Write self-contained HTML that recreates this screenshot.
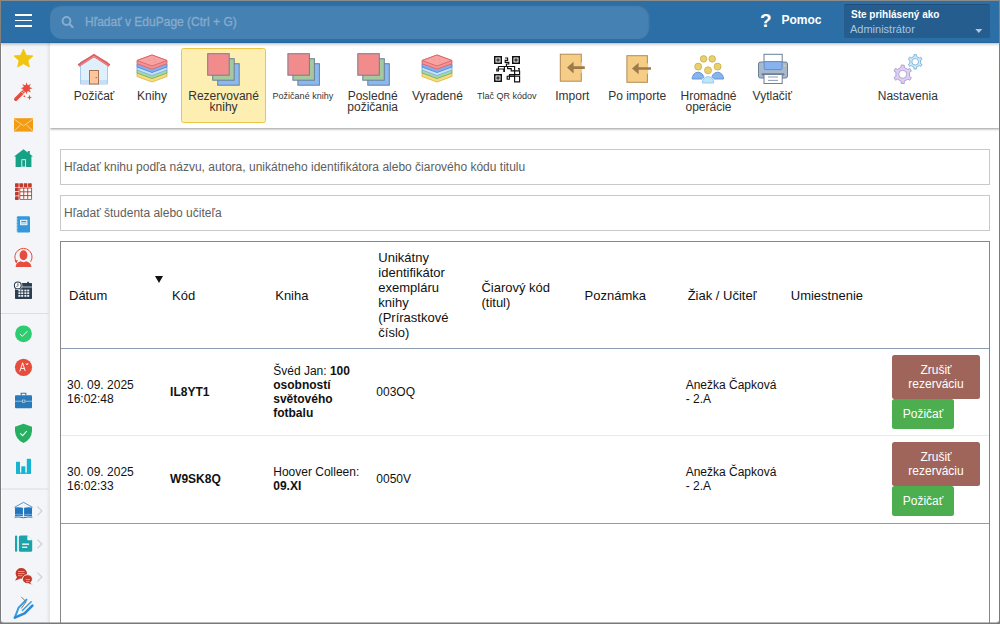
<!DOCTYPE html>
<html><head><meta charset="utf-8">
<style>
*{box-sizing:border-box;margin:0;padding:0}
html,body{width:1000px;height:624px;overflow:hidden;background:#787878;font-family:"Liberation Sans",sans-serif;color:#222}
#frame{position:absolute;left:0;top:0;width:1000px;height:623px;overflow:hidden;background:#fff;border-radius:0 0 4px 4px}
#border{position:absolute;left:0;top:0;width:1000px;height:624px;border:1px solid #7a7a7a;border-top-color:#8c8c8b;border-bottom-color:#787878;box-shadow:inset 0 -1.6px 0.6px -0.6px rgba(120,120,120,.5);border-radius:0 0 4px 4px;z-index:99}
#bl{position:absolute;left:0;top:0;width:1px;height:80px;background:linear-gradient(#8a857f,#7a7a7a);z-index:100}
#br{position:absolute;right:0;top:0;width:1px;height:80px;background:linear-gradient(#8a857f,#7a7a7a);z-index:100}
#hdr{position:absolute;left:0;top:0;width:1000px;height:43px;background:#2c6fa7;border-bottom:1px solid #2767a1;box-shadow:0 1px 3px rgba(0,0,0,.3);z-index:5}
#burger i{position:absolute;left:15px;width:17px;height:1.8px;background:#fff}
#gsearch{position:absolute;left:50px;top:5px;width:600px;height:34px;border-radius:12px;background:#4581b3;box-shadow:inset -1px 1px 1.5px rgba(0,0,0,.16)}
#gsearch span{position:absolute;left:35px;top:10px;font-size:12px;color:#87abcc;-webkit-text-stroke:0.35px #87abcc}
#help{position:absolute;left:760px;top:10px;color:#fff;font-weight:bold;font-size:12px}
#user{position:absolute;left:844px;top:4px;width:146px;height:34px;background:#255d8e;border-radius:2px;border-top:1px solid #1f4f7a}
#user .l1{position:absolute;left:7px;top:4px;font-size:10px;font-weight:bold;color:#fff}
#user .l2{position:absolute;left:6px;top:18px;font-size:11px;color:#a9c6e0}
#side{position:absolute;left:0;top:42px;width:50px;height:582px;background:#f3f5f8;border-left:2px solid #fbfcfd;box-shadow:inset -3px 0 3px -1px rgba(0,0,0,.07);z-index:3}
#tb{position:absolute;left:50px;top:42px;width:950px;height:86px;background:#fff;box-shadow:0 1px 2.5px rgba(0,0,0,.42);z-index:2}
#sel{z-index:3;position:absolute;left:181px;top:48px;width:85px;height:75px;background:#fdeeb2;border:1px solid #efc547;border-radius:2.5px}
.tl{z-index:4;position:absolute;top:91px;width:120px;text-align:center;font-size:12px;line-height:11px;color:#333}
.tl.sm{font-size:9px;top:91.4px}
.inp{position:absolute;left:60px;width:930px;height:36px;border:1px solid #c9c9c9;font-size:12px;color:#5e5e5e}
.inp span{position:absolute;left:3px;top:10px}
#tbl{position:absolute;left:60px;top:241px;width:930px;height:400px;border:1px solid #888;border-bottom:none}
table{border-collapse:collapse;table-layout:fixed;width:928px}
td,th{font-weight:normal;text-align:left;vertical-align:middle;padding:0 0 0 8px;font-size:12px;line-height:14px;color:#111}
th{font-size:13px;line-height:15px;height:106px;padding-top:2px}
tr.r td{height:auto}
tr.r{height:87px}
.btn{position:absolute;color:#fff;font-size:12px;line-height:14px;text-align:center;border-radius:2.5px}
</style></head><body>
<div id="frame">
<div id="hdr">
  <div id="burger"><i style="top:14.2px"></i><i style="top:19.5px"></i><i style="top:24.8px"></i></div>
  <div id="gsearch">
    <svg style="position:absolute;left:11px;top:10px" width="14" height="14" viewBox="0 0 14 14"><circle cx="5.5" cy="6" r="3.9" fill="none" stroke="#86acd0" stroke-width="2"/><path d="M8.5 9L11.5 12" stroke="#86acd0" stroke-width="2.2" stroke-linecap="round"/></svg>
    <span>Hľadať v EduPage (Ctrl + G)</span>
  </div>
  <div id="help"><span style="font-size:19px;position:absolute;left:0;top:0px">?</span><span style="position:absolute;left:21.5px;top:3.3px">Pomoc</span></div>
  <div id="user"><div class="l1">Ste prihlásený ako</div><div class="l2">Administrátor</div>
    <svg style="position:absolute;left:131px;top:23.5px" width="8" height="5"><path d="M0.3 0H7.3L3.8 4z" fill="#adc8e2"/></svg></div>
</div>
<div id="side"></div>
<svg id="sidesvg" style="position:absolute;left:0;top:0;z-index:4" width="50" height="624" viewBox="0 0 50 624">
<!-- star -->
<polygon points="23.50,49.00 26.26,55.20 33.01,55.91 27.97,60.45 29.38,67.09 23.50,63.70 17.62,67.09 19.03,60.45 13.99,55.91 20.74,55.20" fill="#f1c40f" stroke="#f1c40f" stroke-width="0.8" stroke-linejoin="round"/>
<!-- wand -->
<polygon points="26.60,82.20 27.71,85.52 30.84,83.96 29.28,87.09 32.60,88.20 29.28,89.31 30.84,92.44 27.71,90.88 26.60,94.20 25.49,90.88 22.36,92.44 23.92,89.31 20.60,88.20 23.92,87.09 22.36,83.96 25.49,85.52" fill="#e74c3c"/>
<circle cx="26.6" cy="88.2" r="3" fill="#e74c3c"/>
<line x1="15.8" y1="99.2" x2="25" y2="90" stroke="#e74c3c" stroke-width="3.6" stroke-linecap="round"/>
<line x1="21.3" y1="91.6" x2="23.6" y2="93.9" stroke="#f3f4f7" stroke-width="0.8"/>
<line x1="22.6" y1="90.3" x2="24.9" y2="92.6" stroke="#f3f4f7" stroke-width="0.8"/>
<path d="M29.5 94.8 L30.3 96.9 L32.2 97.5 L30.3 98.1 L29.5 100.2 L28.7 98.1 L26.8 97.5 L28.7 96.9z" fill="#e74c3c"/>
<path d="M24.3 95 L25.3 97 L23.3 97z" fill="#e74c3c"/>
<!-- envelope -->
<rect x="14" y="118.2" width="19" height="13.4" fill="#f39c12"/>
<path d="M14.3 119.2 L23.5 125.8 L32.7 119.2 M14.3 130.8 L20.5 124.8 M32.7 130.8 L26.5 124.8" fill="none" stroke="#fbe0b0" stroke-width="0.8"/>
<!-- house -->
<path d="M23.5 149.2 L14 156.6 L15.6 156.6 L15.6 167 L31.4 167 L31.4 156.6 L33 156.6 L29.8 154.1 L29.8 150.9 L27.8 150.9 L27.8 152.6z" fill="#16a085"/>
<rect x="21.8" y="159.7" width="3.8" height="7.3" fill="none" stroke="#e3f4f0" stroke-width="0.9"/>
<!-- grid -->
<g fill="#c0392b"><rect x="15.00" y="183.2" width="3.7" height="3.7" rx="0.6"/><rect x="19.35" y="183.2" width="3.7" height="3.7" rx="0.6"/><rect x="23.70" y="183.2" width="3.7" height="3.7" rx="0.6"/><rect x="28.05" y="183.2" width="3.7" height="3.7" rx="0.6"/><rect x="15" y="187.55" width="3.7" height="3.7" rx="0.6"/><rect x="15" y="191.90" width="3.7" height="3.7" rx="0.6"/><rect x="15" y="196.25" width="3.7" height="3.7" rx="0.6"/><rect x="19.35" y="187.55" width="12.7" height="12.3" rx="0.8"/></g>
<g fill="#fff"><rect x="20.30" y="188.50" width="3" height="2.85"/><rect x="20.30" y="192.30" width="3" height="2.85"/><rect x="20.30" y="196.10" width="3" height="2.85"/><rect x="24.25" y="188.50" width="3" height="2.85"/><rect x="24.25" y="192.30" width="3" height="2.85"/><rect x="24.25" y="196.10" width="3" height="2.85"/><rect x="28.20" y="188.50" width="3" height="2.85"/><rect x="28.20" y="192.30" width="3" height="2.85"/><rect x="28.20" y="196.10" width="3" height="2.85"/></g>
<!-- notebook -->
<rect x="16.8" y="216.3" width="13.2" height="16.2" rx="1.3" fill="#3498db"/>
<rect x="20.6" y="220.2" width="6.4" height="4.6" fill="#aed6f1" stroke="#fff" stroke-width="0.8"/><rect x="21.4" y="221" width="4.8" height="0.9" fill="#3a8fd0"/>
<g stroke="#d6eaf8" stroke-width="0.7"><line x1="16" y1="219" x2="18" y2="219"/><line x1="16" y1="222" x2="18" y2="222"/><line x1="16" y1="225" x2="18" y2="225"/><line x1="16" y1="228" x2="18" y2="228"/><line x1="16" y1="231" x2="18" y2="231"/></g>
<!-- person -->
<ellipse cx="23.5" cy="255.3" rx="3.9" ry="5" fill="#e74c3c"/>
<path d="M15.6 267 Q15.8 262.6 20.6 261.2 L23.5 262.2 L26.4 261.2 Q31.2 262.6 31.4 267z" fill="#e74c3c"/>
<path d="M16.2 261.6 A8.6 8.6 0 1 1 30.6 261.8" fill="none" stroke="#e74c3c" stroke-width="1"/>
<path d="M14.4 260.8 L17.8 260 L16.6 263.6z" fill="#e74c3c"/>
<!-- calendar -->
<rect x="15" y="283" width="17" height="16" rx="0.8" fill="#2c3e50"/>
<rect x="15" y="286.2" width="17" height="1.6" fill="#8794a2"/>
<rect x="27.2" y="281.8" width="1.8" height="3" rx="0.5" fill="#2c3e50"/>
<g fill="#f4f6f8"><rect x="18.4" y="289.6" width="2" height="1.8"/><rect x="21.2" y="289.6" width="2" height="1.8"/><rect x="24.4" y="289.6" width="2" height="1.8"/><rect x="27.2" y="289.6" width="2" height="1.8"/><rect x="18.4" y="292.3" width="2" height="1.8"/><rect x="21.2" y="292.3" width="2" height="1.8"/><rect x="24.4" y="292.3" width="2" height="1.8"/><rect x="27.2" y="292.3" width="2" height="1.8"/><rect x="18.4" y="295.0" width="2" height="1.8"/><rect x="21.2" y="295.0" width="2" height="1.8"/><rect x="24.4" y="295.0" width="2" height="1.8"/><rect x="27.2" y="295.0" width="2" height="1.8"/></g>
<circle cx="17.8" cy="285.4" r="4.6" fill="#f3f5f8"/>
<circle cx="17.8" cy="285.4" r="3.4" fill="#ffffff" stroke="#2c3e50" stroke-width="1.1"/>
<path d="M17.9 283.4 V285.6 L16.5 287" fill="none" stroke="#2c3e50" stroke-width="0.9"/>
<!-- separator -->
<rect x="1" y="313" width="48" height="1" fill="#dcdee2"/>
<!-- green badge -->
<circle cx="23.5" cy="333.8" r="8.4" fill="#2ecc71"/>
<path d="M19.9 334 L22.4 336.3 L27.4 331.2" fill="none" stroke="#fff" stroke-width="0.9"/>
<!-- red A -->
<circle cx="23.5" cy="367.3" r="8.6" fill="#e74c3c"/>
<path d="M19.8 371.5 L22.6 362.8 L25.2 371 M20.8 368.6 L24.6 368.4 M26 363.5 L27 365 L28 363" fill="none" stroke="#fff" stroke-width="0.9"/>
<!-- briefcase -->
<path d="M21.2 395.5 V393.3 H25.8 V395.5" fill="none" stroke="#2a7ab8" stroke-width="1.1"/>
<rect x="15" y="395.3" width="17" height="13" rx="1" fill="#2a7ab8"/>
<rect x="15" y="400.8" width="17" height="0.8" fill="#a9cce3"/>
<rect x="22.3" y="400" width="2.6" height="2.4" fill="#2a7ab8" stroke="#d4e6f1" stroke-width="0.6"/>
<!-- shield -->
<path d="M23.5 423.8 L32 426.8 L32 431 Q31.5 439.5 23.5 443 Q15.5 439.5 15 431 L15 426.8z" fill="#27ae60"/>
<path d="M20.3 433.3 L22.7 435.6 L26.8 431" fill="none" stroke="#fff" stroke-width="1.1"/>
<!-- bar chart -->
<g fill="#17b3d3"><rect x="16" y="461.8" width="4" height="12"/><rect x="21.3" y="466.3" width="4" height="7.5"/><rect x="26.8" y="458.8" width="4.2" height="15"/><rect x="16" y="472.6" width="15" height="1.2"/></g>
<rect x="1" y="488.5" width="48" height="1" fill="#dcdee2"/>
<!-- book -->
<path d="M14.4 507.4 L23.5 502.3 L32.6 507.4" fill="none" stroke="#2f7fc4" stroke-width="0.8"/>
<path d="M15 507.6 Q19 506.8 22.9 507.8 V516.2 Q19 515.4 15 516.2z M32 507.6 Q28 506.8 24.1 507.8 V516.2 Q28 515.4 32 516.2z" fill="#2176bd"/>
<path d="M15 514.6 Q19 513.8 22.9 514.8 M24.1 514.8 Q28 513.8 32 514.6" fill="none" stroke="#a8cbe9" stroke-width="0.6"/>
<path d="M14.6 517.2 Q19 516.4 23.5 517.8 Q28 516.4 32.4 517.2" fill="none" stroke="#2176bd" stroke-width="1"/>
<!-- doc -->
<rect x="15" y="535.5" width="2.2" height="16.3" rx="1" fill="#1aa3a8"/>
<path d="M20.4 535.5 H27.4 L32.2 540.3 V550.3 Q32.2 551.8 30.7 551.8 H20.4 Q18.9 551.8 18.9 550.3 V537 Q18.9 535.5 20.4 535.5z" fill="#1aa3a8"/>
<path d="M27.4 535.5 V540.3 H32.2z" fill="#f3f5f8"/>
<path d="M27.9 536.2 L31.6 539.8 H27.9z" fill="#ffffff"/>
<rect x="22.1" y="543.5" width="7" height="1.3" fill="#fff"/><rect x="22.1" y="546.6" width="5.2" height="1.3" fill="#fff"/>
<!-- chat -->
<path d="M15.6 573.3 A5.7 5.3 0 1 1 20.5 578.6 L15 580.8 L17 577.2 Q15.6 575.6 15.6 573.3z" fill="#c0392b"/>
<path d="M22.4 579.2 A5 4.5 0 1 1 30.6 582.6 L32.6 585.3 L28 583.6 A5 4.5 0 0 1 22.4 579.2z" fill="#c0392b" stroke="#f3f5f8" stroke-width="0.9"/>
<g stroke="#e8a199" stroke-width="0.9"><line x1="18" y1="571.5" x2="24.5" y2="571.5"/><line x1="18" y1="573.6" x2="24.5" y2="573.6"/><line x1="18" y1="575.7" x2="22.5" y2="575.7"/><line x1="25.5" y1="579.6" x2="30" y2="579.6"/><line x1="26" y1="581.6" x2="29.5" y2="581.6"/></g>
<!-- pen -->
<g fill="none" stroke-linecap="round" stroke-linejoin="round">
<path d="M14.8 617.6 L18.6 607.6 L26.5 599.6" stroke="#3b9bdb" stroke-width="2"/>
<path d="M14.8 617.6 L24.6 613.4 L32.4 605.6" stroke="#2f8ad0" stroke-width="2.6"/>
<path d="M22.4 610.6 L31.2 601.8" stroke="#3b9bdb" stroke-width="1.4"/>
<path d="M21.6 597.2 L26.2 601.8 L21.4 608.2" stroke="#8b7358" stroke-width="1"/>
</g>
<!-- chevrons -->
<g fill="none" stroke="#cdd0d4" stroke-width="1.2"><path d="M37.5 506.5 L41.8 510.9 L37.5 515.3"/><path d="M37.5 539.6 L41.8 544 L37.5 548.4"/><path d="M37.5 572.7 L41.8 577.1 L37.5 581.5"/></g>
</svg>

<div id="tb"></div>
<div id="sel"></div>
<svg id="tbsvg" style="position:absolute;left:0;top:0;z-index:4" width="1000" height="130" viewBox="0 0 1000 130">
<!-- house -->
<path d="M80.5 62 L94 55.5 L107.5 62 V84 H80.5z" fill="#dff0fc" stroke="#a9c9ea" stroke-width="1"/>
<rect x="81" y="80" width="26" height="3.5" fill="#c3e0f6"/>
<path d="M78.5 65.5 L94 55.5 L109.5 65.5" fill="none" stroke="#e25c5c" stroke-width="3" stroke-linejoin="miter"/>
<path d="M79.5 65.5 L94 56.2 L108.5 65.5" fill="none" stroke="#f59a9a" stroke-width="0.8"/>
<rect x="89.5" y="70.5" width="9" height="13.5" fill="#ffc59b" stroke="#a47252" stroke-width="1"/>
<circle cx="96.2" cy="77.6" r="0.7" fill="#7a5038"/>
<polygon points="152.0,67.5 167.0,73.0 167.0,76.5 152.0,82.0 137.0,76.5 137.0,73.0" fill="#f7dc7c" stroke="#d9b94f" stroke-width="0.9" stroke-linejoin="round"/>
<polygon points="152.0,64.5 167.0,70.0 167.0,73.0 152.0,78.5 137.0,73.0 137.0,70.0" fill="#a8d8a2" stroke="#74ad6c" stroke-width="0.9" stroke-linejoin="round"/>
<polygon points="152.0,61.5 167.0,67.0 167.0,70.0 152.0,75.5 137.0,70.0 137.0,67.0" fill="#c4e4fb" stroke="#7eaee0" stroke-width="0.9" stroke-linejoin="round"/>
<polygon points="152.0,58.5 167.0,64.0 167.0,67.0 152.0,72.5 137.0,67.0 137.0,64.0" fill="#80aef0" stroke="#5a86cc" stroke-width="0.9" stroke-linejoin="round"/>
<polygon points="152.0,55.0 167.0,60.5 167.0,63.7 152.0,69.2 137.0,63.7 137.0,60.5" fill="#f39393" stroke="#dc6464" stroke-width="0.9" stroke-linejoin="round"/>
<polygon points="152.0,55.0 167.0,60.5 152.0,66.0 137.0,60.5" fill="#f7a3a3" stroke="#dc6464" stroke-width="0.9" stroke-linejoin="round"/>
<g fill="#e88080"><circle cx="149" cy="60" r="0.5"/><circle cx="154" cy="59" r="0.5"/><circle cx="155" cy="62" r="0.5"/></g>
<rect x="217.7" y="63.7" width="21.5" height="21.5" fill="#8ab9f2" stroke="#6b7f98" stroke-width="1"/>
<rect x="212.7" y="58.7" width="21.5" height="21.5" fill="#a5c99c" stroke="#6b7f98" stroke-width="1"/>
<rect x="207.7" y="53.7" width="21.5" height="21.5" fill="#f28c8c" stroke="#6b7f98" stroke-width="1"/>

<rect x="297.9" y="63.7" width="21.5" height="21.5" fill="#8ab9f2" stroke="#6b7f98" stroke-width="1"/>
<rect x="292.9" y="58.7" width="21.5" height="21.5" fill="#a5c99c" stroke="#6b7f98" stroke-width="1"/>
<rect x="287.9" y="53.7" width="21.5" height="21.5" fill="#f28c8c" stroke="#6b7f98" stroke-width="1"/>

<rect x="367.8" y="63.7" width="21.5" height="21.5" fill="#8ab9f2" stroke="#6b7f98" stroke-width="1"/>
<rect x="362.8" y="58.7" width="21.5" height="21.5" fill="#a5c99c" stroke="#6b7f98" stroke-width="1"/>
<rect x="357.8" y="53.7" width="21.5" height="21.5" fill="#f28c8c" stroke="#6b7f98" stroke-width="1"/>

<polygon points="437.0,67.5 452.0,73.0 452.0,76.5 437.0,82.0 422.0,76.5 422.0,73.0" fill="#f7dc7c" stroke="#d9b94f" stroke-width="0.9" stroke-linejoin="round"/>
<polygon points="437.0,64.5 452.0,70.0 452.0,73.0 437.0,78.5 422.0,73.0 422.0,70.0" fill="#a8d8a2" stroke="#74ad6c" stroke-width="0.9" stroke-linejoin="round"/>
<polygon points="437.0,61.5 452.0,67.0 452.0,70.0 437.0,75.5 422.0,70.0 422.0,67.0" fill="#c4e4fb" stroke="#7eaee0" stroke-width="0.9" stroke-linejoin="round"/>
<polygon points="437.0,58.5 452.0,64.0 452.0,67.0 437.0,72.5 422.0,67.0 422.0,64.0" fill="#80aef0" stroke="#5a86cc" stroke-width="0.9" stroke-linejoin="round"/>
<polygon points="437.0,55.0 452.0,60.5 452.0,63.7 437.0,69.2 422.0,63.7 422.0,60.5" fill="#f39393" stroke="#dc6464" stroke-width="0.9" stroke-linejoin="round"/>
<polygon points="437.0,55.0 452.0,60.5 437.0,66.0 422.0,60.5" fill="#f7a3a3" stroke="#dc6464" stroke-width="0.9" stroke-linejoin="round"/>
<g fill="#e88080"><circle cx="434" cy="60" r="0.5"/><circle cx="439" cy="59" r="0.5"/><circle cx="440" cy="62" r="0.5"/></g>
<!-- QR -->
<rect x="494" y="56" width="8" height="8" fill="#111"/><rect x="495.5" y="57.5" width="5" height="5" fill="#fff"/><rect x="496.5" y="58.5" width="3" height="3" fill="#111"/><rect x="497.4" y="59.4" width="1.2" height="1.2" fill="#999"/>
<rect x="512" y="56" width="8" height="8" fill="#111"/><rect x="513.5" y="57.5" width="5" height="5" fill="#fff"/><rect x="514.5" y="58.5" width="3" height="3" fill="#111"/><rect x="515.4" y="59.4" width="1.2" height="1.2" fill="#999"/>
<rect x="494" y="74" width="8" height="8" fill="#111"/><rect x="495.5" y="75.5" width="5" height="5" fill="#fff"/><rect x="496.5" y="76.5" width="3" height="3" fill="#111"/><rect x="497.4" y="77.4" width="1.2" height="1.2" fill="#999"/>
<g fill="none" stroke="#111" stroke-width="1.15" stroke-linejoin="miter">
<path d="M505 58 H507.6 V60.4 H505.2 V62.4 H508.8 V64 H506.4 V66.5"/>
<path d="M498.4 66.5 H514.6 V71.5"/>
<path d="M498.4 66.5 V71 H496.8 V69 H503.8 V71.3 H504.4 V66.5"/>
<path d="M507.6 66.5 V68.6 H511.2 V70.8 H519.2 V68.6 H518"/>
<path d="M514.6 70.8 V81.8 H519.6 V76.2 H509.6 V74.6 H519.6 V70.8"/>
<path d="M514.6 76.2 H507.2 V79.2 H509.4 V74.6"/>
</g>
<!-- import -->
<rect x="560.3" y="54.2" width="21" height="27" fill="#f5cd86" stroke="#b38b52" stroke-width="1"/>
<rect x="580.5" y="62.5" width="1.6" height="10.5" fill="#f5cd86"/>
<path d="M567 67.6 L573.6 61.8 V66.3 H584.8 V68.9 H573.6 V73.4z" fill="#9b7b49"/>
<!-- po importe -->
<rect x="626.9" y="55.7" width="20.5" height="26.6" fill="#f5cd86" stroke="#b38b52" stroke-width="1"/>
<rect x="646.6" y="63.4" width="1.6" height="10.5" fill="#f5cd86"/>
<path d="M632 68.5 L638.6 62.7 V67.2 H651 V69.8 H638.6 V74.3z" fill="#9b7b49"/>
<!-- people -->
<g fill="#e9d06c" stroke="#c9ad4b" stroke-width="0.8">
<circle cx="703.6" cy="58.9" r="3.3"/><circle cx="712.2" cy="58.9" r="3.3"/>
<circle cx="698.2" cy="66.6" r="3.5"/><circle cx="717.6" cy="66.6" r="3.5"/><circle cx="708" cy="70.3" r="3.5"/>
</g>
<path d="M692.1 79 A6 6.8 0 0 1 704.1 79z" fill="#86b4ec" stroke="#5f8fd0" stroke-width="0.9"/>
<path d="M711.6 79 A6 6.8 0 0 1 723.6 79z" fill="#86b4ec" stroke="#5f8fd0" stroke-width="0.9"/>
<path d="M701.2 83.4 A6.8 7.2 0 0 1 714.8 83.4z" fill="#ffffff"/><path d="M702.2 83 A5.8 6.4 0 0 1 713.8 83z" fill="#bfe5fb" stroke="#8cc0e8" stroke-width="0.8"/>
<!-- printer -->
<rect x="764" y="54.3" width="18.2" height="8.5" fill="#fff" stroke="#6b7f98" stroke-width="1"/>
<rect x="758.5" y="62" width="29" height="16" rx="2" fill="#a9b9cd" stroke="#6b7f98" stroke-width="1"/>
<rect x="764.2" y="61.6" width="17.8" height="8" rx="1" fill="#86b3f0" stroke="#5f87c7" stroke-width="0.9"/>
<rect x="761.5" y="73.2" width="23" height="2.2" rx="1.1" fill="#6b7f98"/>
<rect x="764" y="74.5" width="18.2" height="9" fill="#fff" stroke="#6b7f98" stroke-width="1"/>
<g stroke="#8b9bb0" stroke-width="1"><line x1="768" y1="77" x2="778" y2="77"/><line x1="768" y1="80.4" x2="778" y2="80.4"/></g>
<circle cx="784.6" cy="65.6" r="0.9" fill="#f2d16b"/>
<!-- gears -->
<path fill-rule="evenodd" d="M901.15 67.37 L901.15 65.13 L904.25 65.13 L904.25 67.37 L907.93 69.49 L909.87 68.37 L911.42 71.06 L909.48 72.18 L909.48 76.42 L911.42 77.54 L909.87 80.23 L907.93 79.11 L904.25 81.23 L904.25 83.47 L901.15 83.47 L901.15 81.23 L897.47 79.11 L895.53 80.23 L893.98 77.54 L895.92 76.42 L895.92 72.18 L893.98 71.06 L895.53 68.37 L897.47 69.49z M906.70 74.30 A4.0 4.0 0 1 0 898.70 74.30 A4.0 4.0 0 1 0 906.70 74.30z" fill="#ddd0f3" stroke="#a690cf" stroke-width="0.8" stroke-linejoin="round"/>
<path fill-rule="evenodd" d="M913.98 56.33 L913.98 54.60 L916.42 54.60 L916.42 56.33 L919.32 58.01 L920.82 57.15 L922.04 59.26 L920.54 60.13 L920.54 63.47 L922.04 64.34 L920.82 66.45 L919.32 65.59 L916.42 67.27 L916.42 69.00 L913.98 69.00 L913.98 67.27 L911.08 65.59 L909.58 66.45 L908.36 64.34 L909.86 63.47 L909.86 60.13 L908.36 59.26 L909.58 57.15 L911.08 58.01z M918.50 61.80 A3.3 3.3 0 1 0 911.90 61.80 A3.3 3.3 0 1 0 918.50 61.80z" fill="#cdeafa" stroke="#6fa9cf" stroke-width="0.8" stroke-linejoin="round"/>
</svg>
<div class="tl" style="left:34.1px">Požičať</div>
<div class="tl" style="left:92.0px">Knihy</div>
<div class="tl" style="left:163.6px">Rezervované<br>knihy</div>
<div class="tl sm" style="left:242.9px">Požičané knihy</div>
<div class="tl" style="left:312.7px">Posledné<br>požičania</div>
<div class="tl" style="left:377.4px">Vyradené</div>
<div class="tl sm" style="left:446.7px">Tlač QR kódov</div>
<div class="tl" style="left:512.3px">Import</div>
<div class="tl" style="left:577.2px">Po importe</div>
<div class="tl" style="left:648.5px">Hromadné<br>operácie</div>
<div class="tl" style="left:712.3px">Vytlačiť</div>
<div class="tl" style="left:847.8px">Nastavenia</div>

<div class="inp" style="top:149px"><span>Hľadať knihu podľa názvu, autora, unikátneho identifikátora alebo čiarového kódu titulu</span></div>
<div class="inp" style="top:195px"><span>Hľadať študenta alebo učiteľa</span></div>
<div id="tbl">
<table>
<colgroup><col style="width:11.1111%"><col style="width:11.1111%"><col style="width:11.1111%"><col style="width:11.1111%"><col style="width:11.1111%"><col style="width:11.1111%"><col style="width:11.1111%"><col style="width:11.1111%"><col style="width:11.1111%"></colgroup>
<tr style="border-bottom:1px solid #8c9bb0"><th>Dátum</th><th>Kód</th><th>Kniha</th><th style="padding-top:0">Unikátny<br>identifikátor<br>exempláru<br>knihy<br>(Prírastkové<br>číslo)</th><th style="padding-top:0">Čiarový kód<br>(titul)</th><th>Poznámka</th><th>Žiak / Učiteľ</th><th>Umiestnenie</th><th></th></tr>
<tr class="r" style="border-bottom:1px solid #e9e9e9;height:87px"><td style="padding-left:6px">30. 09. 2025<br>16:02:48</td><td style="padding-left:6px"><b>IL8YT1</b></td><td style="padding-left:6px">Švéd Jan: <b>100<br>osobností<br>světového<br>fotbalu</b></td><td style="padding-left:6px">003OQ</td><td></td><td></td><td style="padding-left:6px">Anežka Čapková<br>- 2.A</td><td></td><td></td></tr>
<tr class="r" style="border-bottom:1px solid #8c9bb0;height:88px"><td style="padding-left:6px">30. 09. 2025<br>16:02:33</td><td style="padding-left:6px"><b>W9SK8Q</b></td><td style="padding-left:6px">Hoover Colleen:<br><b>09.XI</b></td><td style="padding-left:6px">0050V</td><td></td><td></td><td style="padding-left:6px">Anežka Čapková<br>- 2.A</td><td></td><td></td></tr>
</table>
</div>
<div class="btn" style="left:892px;top:355px;width:88px;height:44px;background:#a0655a;padding-top:8px">Zrušiť<br>rezerváciu</div>
<div class="btn" style="left:892px;top:399px;width:62px;height:30px;background:#4cae4f;padding-top:8px">Požičať</div>
<div class="btn" style="left:892px;top:442px;width:88px;height:44px;background:#a0655a;padding-top:8px">Zrušiť<br>rezerváciu</div>
<div class="btn" style="left:892px;top:486px;width:62px;height:30px;background:#4cae4f;padding-top:8px">Požičať</div>
<div style="position:absolute;left:154.5px;top:276px;width:0;height:0;border-left:4px solid transparent;border-right:4px solid transparent;border-top:7px solid #111"></div>
</div>
<div id="border"></div><div id="bl"></div><div id="br"></div>
</body></html>
